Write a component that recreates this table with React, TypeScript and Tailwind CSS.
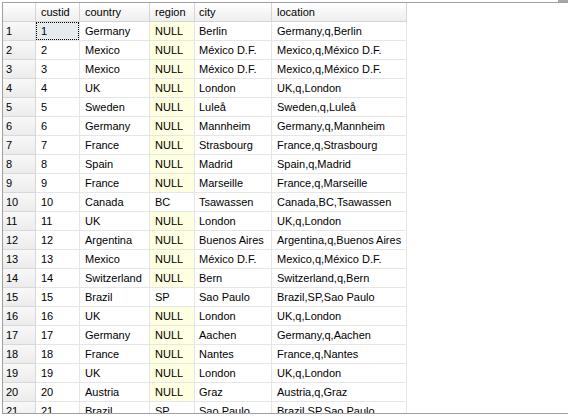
import React from "react";

const rows: [string, string, string, string, string][] = [
  ["1", "Germany", "NULL", "Berlin", "Germany,q,Berlin"],
  ["2", "Mexico", "NULL", "México D.F.", "Mexico,q,México D.F."],
  ["3", "Mexico", "NULL", "México D.F.", "Mexico,q,México D.F."],
  ["4", "UK", "NULL", "London", "UK,q,London"],
  ["5", "Sweden", "NULL", "Luleå", "Sweden,q,Luleå"],
  ["6", "Germany", "NULL", "Mannheim", "Germany,q,Mannheim"],
  ["7", "France", "NULL", "Strasbourg", "France,q,Strasbourg"],
  ["8", "Spain", "NULL", "Madrid", "Spain,q,Madrid"],
  ["9", "France", "NULL", "Marseille", "France,q,Marseille"],
  ["10", "Canada", "BC", "Tsawassen", "Canada,BC,Tsawassen"],
  ["11", "UK", "NULL", "London", "UK,q,London"],
  ["12", "Argentina", "NULL", "Buenos Aires", "Argentina,q,Buenos Aires"],
  ["13", "Mexico", "NULL", "México D.F.", "Mexico,q,México D.F."],
  ["14", "Switzerland", "NULL", "Bern", "Switzerland,q,Bern"],
  ["15", "Brazil", "SP", "Sao Paulo", "Brazil,SP,Sao Paulo"],
  ["16", "UK", "NULL", "London", "UK,q,London"],
  ["17", "Germany", "NULL", "Aachen", "Germany,q,Aachen"],
  ["18", "France", "NULL", "Nantes", "France,q,Nantes"],
  ["19", "UK", "NULL", "London", "UK,q,London"],
  ["20", "Austria", "NULL", "Graz", "Austria,q,Graz"],
  ["21", "Brazil", "SP", "Sao Paulo", "Brazil,SP,Sao Paulo"],
];

export default function App() {
  return (
    <div
      className="w-[568px] h-[417px] bg-white overflow-hidden text-[11px] text-black"
      style={{ fontFamily: '"Liberation Sans", Arial, sans-serif' }}
    >
      <div className="flex h-[2px]">
        <div className="flex-1" />
        <div className="w-[10px] bg-[#a8a8a8]" />
      </div>
      <div className="ml-[2px] h-[412px] border-t border-l border-b border-[#a0a0a0] overflow-hidden">
        <div className="flex h-[19px] leading-[18px]">
          <div className="w-[33px] bg-gradient-to-b from-[#ffffff] to-[#eeeeee] border-r border-b border-[#d5d5d5]" />
          <div className="w-[44px] pl-[5px] bg-gradient-to-b from-[#ffffff] to-[#eeeeee] border-r border-b border-[#d5d5d5]">custid</div>
          <div className="w-[70px] pl-[5px] bg-gradient-to-b from-[#ffffff] to-[#eeeeee] border-r border-b border-[#d5d5d5]">country</div>
          <div className="w-[45px] pl-[5px] bg-gradient-to-b from-[#ffffff] to-[#eeeeee] border-r border-b border-[#d5d5d5]">region</div>
          <div className="w-[77px] pl-[4px] bg-gradient-to-b from-[#ffffff] to-[#eeeeee] border-r border-b border-[#d5d5d5]">city</div>
          <div className="w-[135px] pl-[5px] bg-gradient-to-b from-[#ffffff] to-[#eeeeee] border-r border-b border-[#d5d5d5]">location</div>
        </div>
        {rows.map((r, i) => (
          <div key={i} className="flex h-[19px] leading-[18px]">
            <div className="w-[33px] pl-[3px] bg-gradient-to-b from-[#f8f8f8] to-[#ececec] border-r border-b border-[#d8d8d8]">
              {i + 1}
            </div>
            {i === 0 ? (
              <div className="w-[44px] border-r border-b border-[#e6e6e6]">
                <div className="h-full pl-[4px] bg-[#e6ebee] border border-dotted border-black leading-[16px]">{r[0]}</div>
              </div>
            ) : (
              <div className="w-[44px] pl-[5px] border-r border-b border-[#e6e6e6]">{r[0]}</div>
            )}
            <div className="w-[70px] pl-[5px] border-r border-b border-[#e6e6e6] whitespace-nowrap overflow-hidden">{r[1]}</div>
            <div
              className={
                r[2] === "NULL"
                  ? "w-[45px] pl-[5px] border-r border-b border-[#e6e6e6] bg-[#ffffe1]"
                  : "w-[45px] pl-[5px] border-r border-b border-[#e6e6e6]"
              }
            >
              {r[2]}
            </div>
            <div className="w-[77px] pl-[4px] border-r border-b border-[#e6e6e6] whitespace-nowrap overflow-hidden">{r[3]}</div>
            <div className="w-[135px] pl-[5px] border-r border-b border-[#e6e6e6] whitespace-nowrap overflow-hidden">{r[4]}</div>
          </div>
        ))}
      </div>
    </div>
  );
}
